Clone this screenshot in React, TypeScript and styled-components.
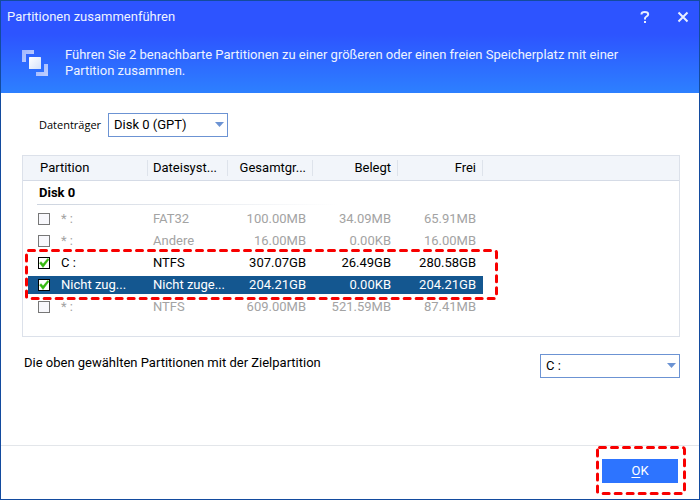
import React, { useState } from 'react';
import styled, { createGlobalStyle, css } from 'styled-components';

const GlobalStyle = createGlobalStyle`
  *, *::before, *::after { box-sizing: border-box; }
  body {
    margin: 0;
    background: #fff;
    color: #000;
    font: 13px/16px Roboto, "Liberation Sans", sans-serif;
  }
  button, select, input { font: inherit; color: inherit; margin: 0; }
`;

const Dialog = styled.div`
  display: flex;
  flex-direction: column;
  min-height: 100vh;
  border: 1px solid #134b9f;
`;

const Banner = styled.header`
  background: linear-gradient(#2d54ff 36%, #2d80ff);
  color: #eef3ff;
  padding-bottom: 14px;
`;

const TitleBar = styled.div`
  display: flex;
  align-items: center;
  height: 32px;
  padding: 0 9px 0 6px;
`;

const Title = styled.h1`
  flex: 1;
  margin: 0;
  font-size: 13px;
  font-weight: 400;
`;

const WindowButton = styled.button`
  display: flex;
  align-items: center;
  justify-content: center;
  width: 14px;
  height: 16px;
  margin-left: 24px;
  padding: 0;
  border: 0;
  background: none;
  cursor: pointer;
`;

const Intro = styled.div`
  display: flex;
  align-items: center;
  gap: 16px;
  padding: 14px 24px 0 21px;

  p { margin: 0; }
`;

const Content = styled.main`
  flex: 1;
  padding: 20px 19px 16px 21px;
`;

const DiskField = styled.div`
  display: flex;
  align-items: center;
  gap: 10px;
  padding-left: 17px;
  margin-bottom: 18px;

  label {
    width: 59px;
    font-family: "Open Sans", sans-serif;
    font-size: 11px;
    white-space: nowrap;
  }
`;

const SelectFrame = styled.div<{ $width: number }>`
  position: relative;
  width: ${(p) => p.$width}px;

  svg {
    position: absolute;
    top: 9px;
    right: 4px;
    pointer-events: none;
  }
`;

const Select = styled.select`
  display: block;
  width: 100%;
  height: 24px;
  padding: 0 20px 0 5px;
  border: 1px solid #6c93d3;
  border-radius: 0;
  background: #fff;
  appearance: none;
`;

const TableFrame = styled.div`
  position: relative;
  padding-bottom: 18px;
  border: 1px solid #dce1ea;
`;

const Table = styled.table`
  width: 100%;
  table-layout: fixed;
  border-collapse: separate;
  border-spacing: 0;

  col { width: 85px; }
  col:nth-child(1) { width: 125px; }
  col:nth-child(2) { width: 80px; }
  col:last-child { width: auto; }
`;

const HeadCell = styled.th<{ $end?: boolean; $first?: boolean }>`
  height: 25px;
  padding: 0;
  border-bottom: 1px solid #d5dbe6;
  background: #f2f5fa;
  font-weight: 400;
  text-align: ${(p) => (p.$end ? 'right' : 'left')};

  span {
    display: block;
    padding: 0 6px 0 ${(p) => (p.$first ? 17 : 5)}px;
    border-right: 1px solid #dee3eb;
    white-space: nowrap;
  }
`;

const GroupCell = styled.th`
  height: 27px;
  padding: 0 0 3px 14px;
  text-align: left;
  font-weight: 700;

  span {
    display: block;
    width: 300px;
    padding: 4px 0 3px 2px;
    border-bottom: 1px solid;
    border-image: linear-gradient(90deg, #cdd4df, #fff) 1;
  }
`;

const Row = styled.tr<{ $state: 'disabled' | 'normal' | 'selected' }>`
  color: ${(p) =>
    p.$state === 'disabled' ? '#a3a3a3' : p.$state === 'selected' ? '#fff' : '#000'};

  ${(p) =>
    p.$state === 'selected' &&
    css`
      td:not(:last-child) {
        background: #145790;
        background-clip: padding-box;
      }
    `}
`;

const Cell = styled.td<{ $end?: boolean; $first?: boolean }>`
  height: 22px;
  padding: 0 7px 0 ${(p) => (p.$first ? 10 : 5)}px;
  border: solid transparent;
  border-width: 2px 0 2px ${(p) => (p.$first ? 5 : 0)}px;
  line-height: 18px;
  text-align: ${(p) => (p.$end ? 'right' : 'left')};
  white-space: nowrap;
`;

const Choice = styled.label`
  display: flex;
  align-items: center;
  gap: 11px;
`;

const Tick = styled.span`
  display: grid;
  width: 12px;
  height: 12px;

  input, svg { grid-area: 1 / 1; }

  input {
    width: 12px;
    height: 12px;
    border: 1px solid #000;
    background: #fff;
    appearance: none;
  }

  input:disabled {
    border-color: #777;
    background: #f8f8fc;
  }

  svg { visibility: hidden; pointer-events: none; }
  input:checked + svg { visibility: visible; }
`;

const TargetField = styled.div`
  display: flex;
  align-items: center;
  justify-content: space-between;
  margin-top: 17px;
  padding-left: 2px;

  label { padding-bottom: 6px; }
`;

const Footer = styled.footer`
  display: flex;
  justify-content: flex-end;
  padding: 13px 21px 16px;
  border-top: 1px solid #e3e6ea;
`;

const ButtonFrame = styled.div`
  position: relative;
`;

const OkButton = styled.button`
  display: block;
  width: 76px;
  height: 24px;
  padding: 0;
  border: 0;
  background: #2d74ff;
  color: #fff;
  cursor: pointer;

  u { text-underline-offset: 2px; }
`;

const Marker = styled.svg<{ $top: number; $left: number }>`
  position: absolute;
  top: ${(p) => p.$top}px;
  left: ${(p) => p.$left}px;
  overflow: visible;
  pointer-events: none;
`;

function DashedMarker(p: { top: number; left: number; width: number; height: number }) {
  return (
    <Marker $top={p.top} $left={p.left} width={p.width} height={p.height} aria-hidden="true">
      <rect
        x="1.5"
        y="1.5"
        width={p.width - 3}
        height={p.height - 3}
        rx="2"
        fill="none"
        stroke="#f80000"
        strokeWidth="3"
        strokeLinecap="round"
        strokeDasharray="6 6"
      />
    </Marker>
  );
}

function DropDown(p: { id: string; width: number; options: string[] }) {
  return (
    <SelectFrame $width={p.width}>
      <Select id={p.id}>
        {p.options.map((o) => (
          <option key={o}>{o}</option>
        ))}
      </Select>
      <svg width="9" height="5" viewBox="0 0 9 5" aria-hidden="true">
        <path d="M0 0h9L4.5 5z" fill="#6c93d3" />
      </svg>
    </SelectFrame>
  );
}

function MergeIcon() {
  return (
    <svg width="27" height="27" viewBox="0 0 27 27" aria-hidden="true">
      <defs>
        <linearGradient id="square" x1="0" y1="0" x2="1" y2="1">
          <stop offset="0" stopColor="#fff" />
          <stop offset="1" stopColor="#d3e1fb" />
        </linearGradient>
        <linearGradient id="corner" x1="0" y1="0" x2="1" y2="1">
          <stop offset="0" stopColor="#9fb5ff" />
          <stop offset="1" stopColor="#bfd0ff" />
        </linearGradient>
      </defs>
      <path d="M0 0h12v4H4v8H0z" fill="url(#corner)" />
      <path d="M26 26H14v-4h8v-8h4z" fill="url(#corner)" />
      <rect x="7" y="7" width="12" height="12" rx="0.5" fill="url(#square)" />
    </svg>
  );
}

const columns = ['Partition', 'Dateisyst...', 'Gesamtgr...', 'Belegt', 'Frei'];

const partitions = [
  { name: '* :', fs: 'FAT32', total: '100.00MB', used: '34.09MB', free: '65.91MB', enabled: false },
  { name: '* :', fs: 'Andere', total: '16.00MB', used: '0.00KB', free: '16.00MB', enabled: false },
  { name: 'C :', fs: 'NTFS', total: '307.07GB', used: '26.49GB', free: '280.58GB', enabled: true },
  { name: 'Nicht zug...', fs: 'Nicht zuge...', total: '204.21GB', used: '0.00KB', free: '204.21GB', enabled: true },
  { name: '* :', fs: 'NTFS', total: '609.00MB', used: '521.59MB', free: '87.41MB', enabled: false },
];

export default function App() {
  const [checked, setChecked] = useState<number[]>([2, 3]);
  const selected = 3;

  const toggle = (i: number) =>
    setChecked((c) => (c.includes(i) ? c.filter((n) => n !== i) : [...c, i]));

  return (
    <Dialog>
      <GlobalStyle />
      <Banner>
        <TitleBar>
          <Title>Partitionen zusammenführen</Title>
          <WindowButton aria-label="Hilfe">
            <svg width="10" height="12" viewBox="0 0 10 12" fill="none" stroke="#e8eeff" strokeWidth="2">
              <path d="M1.5 3.5V3q0-2 3.3-2T8.2 3.2q0 1.3-1.7 2.3T5 7.5v1" />
              <path d="M5 10v2" />
            </svg>
          </WindowButton>
          <WindowButton aria-label="Schließen">
            <svg width="12" height="12" viewBox="0 0 12 12" stroke="#e8eeff" strokeWidth="2">
              <path d="M1.5 1.5l9 9M10.5 1.5l-9 9" />
            </svg>
          </WindowButton>
        </TitleBar>
        <Intro>
          <MergeIcon />
          <p>
            Führen Sie 2 benachbarte Partitionen zu einer größeren oder einen freien Speicherplatz mit einer
            <br />
            Partition zusammen.
          </p>
        </Intro>
      </Banner>

      <Content>
        <DiskField>
          <label htmlFor="disk">Datenträger</label>
          <DropDown id="disk" width={120} options={['Disk 0 (GPT)']} />
        </DiskField>

        <TableFrame>
          <Table>
            <colgroup>
              <col /><col /><col /><col /><col /><col />
            </colgroup>
            <thead>
              <tr>
                {columns.map((c, i) => (
                  <HeadCell key={c} scope="col" $first={i === 0} $end={i > 1}>
                    <span>{c}</span>
                  </HeadCell>
                ))}
                <HeadCell as="td" />
              </tr>
            </thead>
            <tbody>
              <tr>
                <GroupCell colSpan={6} scope="rowgroup">
                  <span>Disk 0</span>
                </GroupCell>
              </tr>
              {partitions.map((p, i) => (
                <Row key={i} $state={!p.enabled ? 'disabled' : i === selected ? 'selected' : 'normal'}>
                  <Cell $first>
                    <Choice>
                      <Tick>
                        <input
                          type="checkbox"
                          checked={checked.includes(i)}
                          disabled={!p.enabled}
                          onChange={() => toggle(i)}
                        />
                        <svg width="12" height="12" viewBox="0 0 12 12" aria-hidden="true">
                          <path
                            d="M1.5 6L3.2 4.7L5 7L9.7 1.5L11 2.5L5 10.5z"
                            fill="#35b80f"
                            stroke="#35b80f"
                            strokeWidth="0.5"
                          />
                        </svg>
                      </Tick>
                      {p.name}
                    </Choice>
                  </Cell>
                  <Cell>{p.fs}</Cell>
                  <Cell $end>{p.total}</Cell>
                  <Cell $end>{p.used}</Cell>
                  <Cell $end>{p.free}</Cell>
                  <Cell />
                </Row>
              ))}
            </tbody>
          </Table>
          <DashedMarker top={93} left={2} width={473} height={51} />
        </TableFrame>

        <TargetField>
          <label htmlFor="target">Die oben gewählten Partitionen mit der Zielpartition</label>
          <DropDown id="target" width={140} options={['C :']} />
        </TargetField>
      </Content>

      <Footer>
        <ButtonFrame>
          <OkButton>
            <u>O</u>K
          </OkButton>
          <DashedMarker top={-13} left={-6} width={90} height={49} />
        </ButtonFrame>
      </Footer>
    </Dialog>
  );
}
